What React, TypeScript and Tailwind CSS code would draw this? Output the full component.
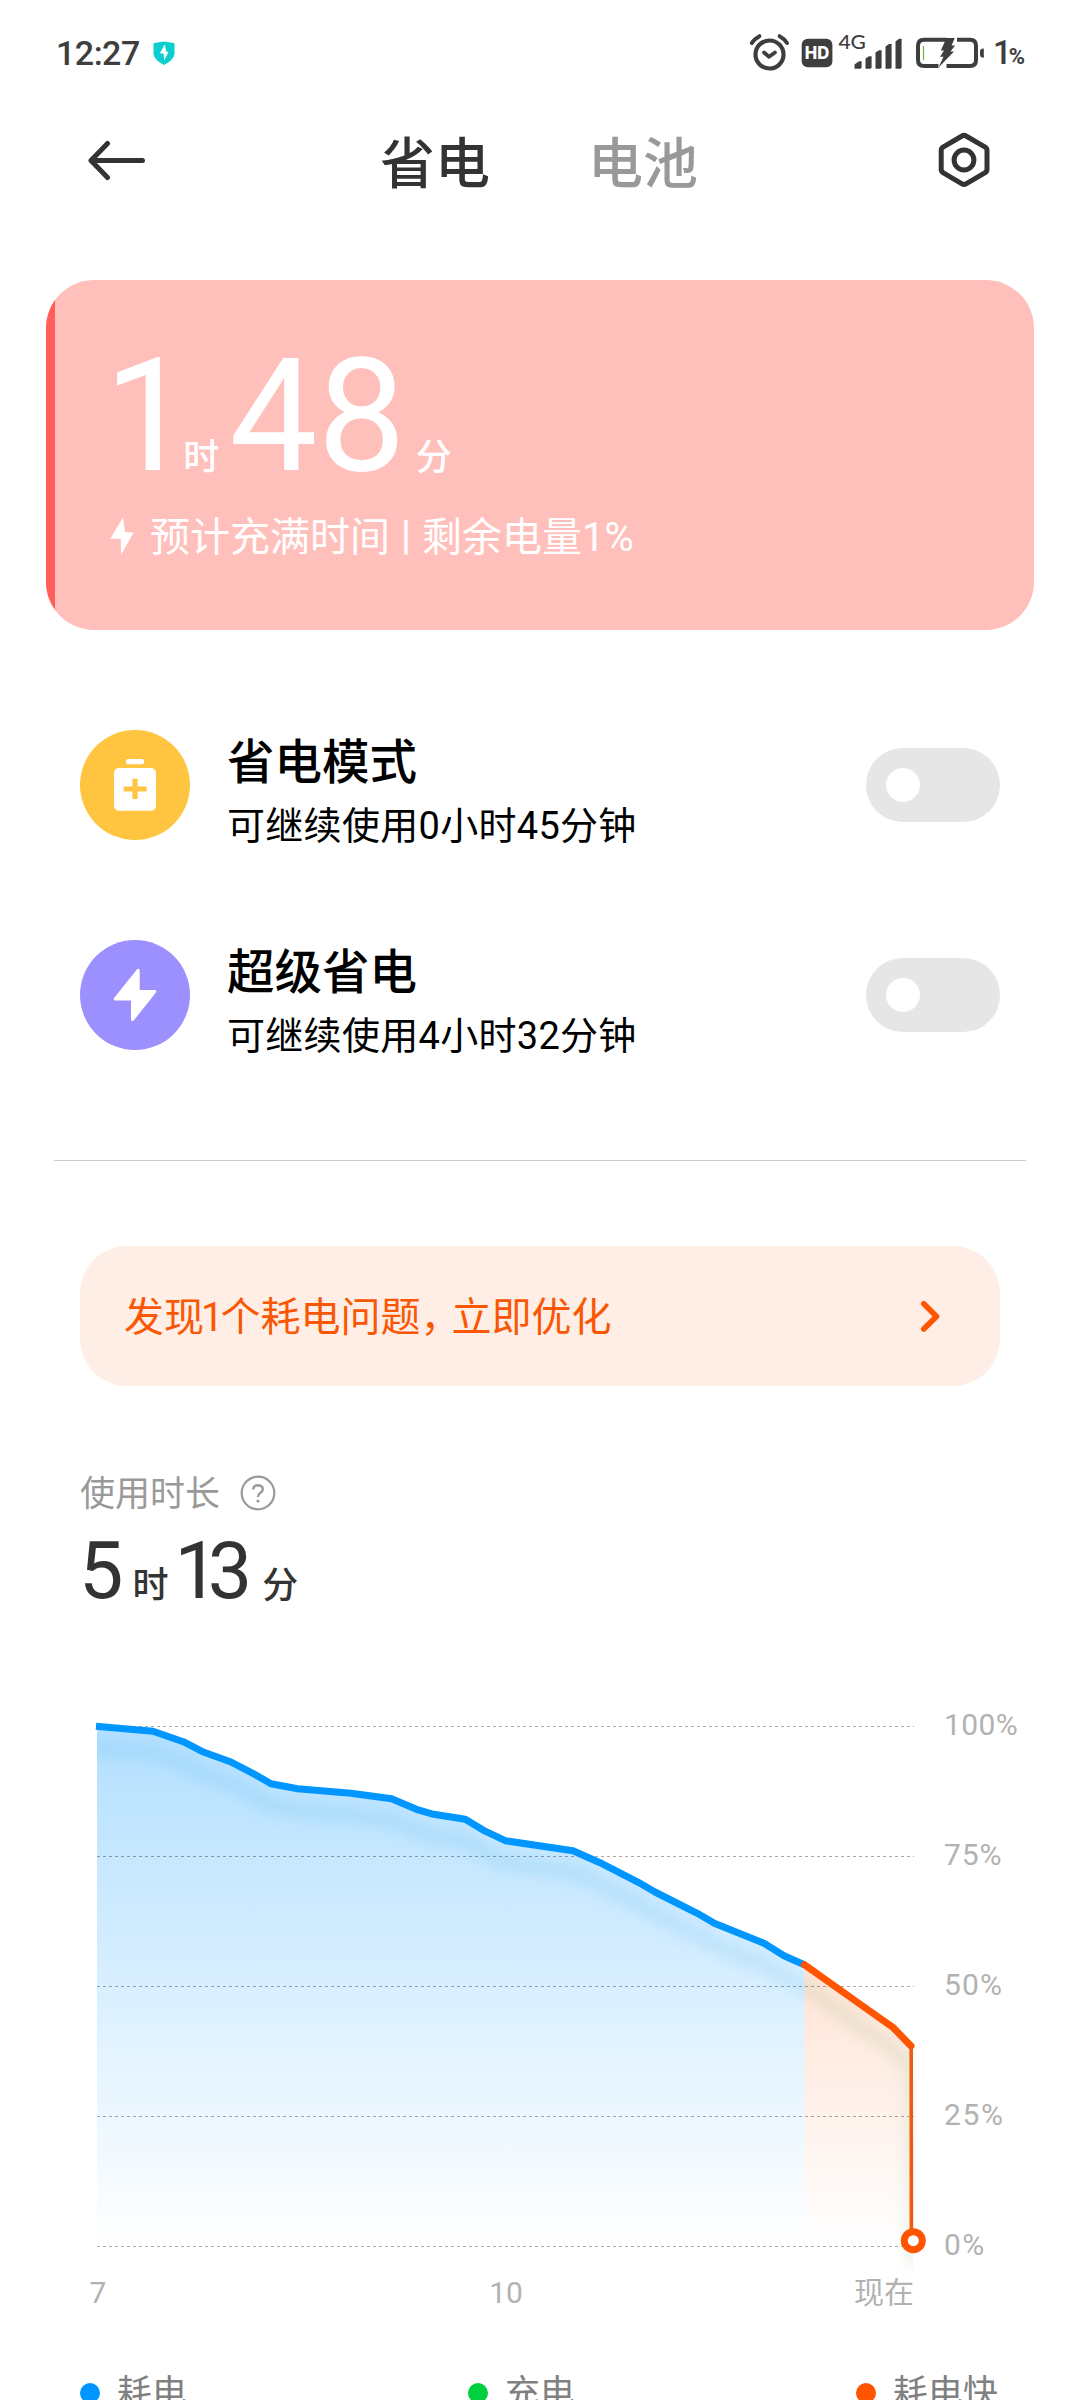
import React from "react";

const points: [number, number][] = [
  [96, 1726.3], [153, 1731.3], [183.3, 1741.7], [204, 1752.3], [231, 1762], [252.8, 1773.3],
  [271, 1783.7], [297.6, 1788.7], [351, 1793.3], [391.6, 1798.7], [416.4, 1809.3], [433.6, 1814.3],
  [465.3, 1819.3], [483.5, 1830.3], [505.3, 1840.7], [573, 1850.7], [600, 1862.7], [638.3, 1882.3],
  [655, 1892], [697.3, 1913.3], [714.3, 1923.3], [764, 1943.3], [784, 1955.7], [804.3, 1964.7],
];
const fastPoints: [number, number][] = [
  [804.3, 1964.7], [868.3, 2010], [893.3, 2027.7], [911, 2046],
];
const toStr = (p: [number, number][]) => p.map((q) => q.join(",")).join(" ");

function Shield() {
  return (
    <svg className="ml-[13px] h-[24px] w-[22px]" viewBox="0 0 22 24">
      <path d="M0.5 2.2 Q6 1 11 0.5 Q16 1 21.5 2.2 V12.5 Q21 19 11 24 Q1 19 0.5 12.5Z" fill="#0bcfcf" />
      <path d="M11.8 3.5 L13.2 10.5 L15.5 10.8 L11.2 19.5 L10.6 12.8 L6.8 12.3Z" fill="#fff" />
    </svg>
  );
}

function StatusIcons() {
  return (
    <svg className="h-[44px] w-[240px]" viewBox="746 30 240 44">
      <g fill="none" stroke="#3e3e3e">
        <circle cx="769.5" cy="53.5" r="14" strokeWidth="4.2" />
        <path d="M764 51.5 L769 55.8 L775 51.5" strokeWidth="3.8" strokeLinecap="round" strokeLinejoin="round" />
        <path d="M751.8 42 Q755 37.5 759.4 35.2" strokeWidth="4" strokeLinecap="round" />
        <path d="M787 42 Q784 37.5 779.6 35.2" strokeWidth="4" strokeLinecap="round" />
      </g>
      <rect x="801.7" y="37.7" width="30.7" height="28.6" rx="6" fill="#3e3e3e" />
      <text x="817" y="58" textAnchor="middle" fontSize="17" fontWeight="800" fill="#fff" fontFamily="Inter, sans-serif" textLength="24.5" lengthAdjust="spacingAndGlyphs">HD</text>
      <text x="838.4" y="48.3" fontSize="19.5" fill="#3e3e3e" fontFamily="Lato, sans-serif" fontWeight="500" textLength="27.5" lengthAdjust="spacingAndGlyphs">4G</text>
      <g fill="#3e3e3e">
        <path d="M854.5 67.7 V63.5 L859 60.3 H861.6 V66.5 L860.5 67.7Z" />
        <path d="M865.5 67.7 V57.5 L869 55.2 H871.6 V66.5 L870.5 67.7Z" />
        <path d="M875.5 67.7 V51.5 L879 49.2 H881.6 V66.5 L880.5 67.7Z" />
        <path d="M885.5 67.7 V45.5 L889 43 H891.6 V66.5 L890.5 67.7Z" />
        <path d="M895.5 67.7 V40.5 L899 37.7 H901.6 V66.5 L900.5 67.7Z" />
      </g>
      <path d="M947 38.7 H924 Q918 38.7 918 44.7 V59 Q918 65 924 65 H938.5" fill="none" stroke="#3e3e3e" strokeWidth="4" />
      <path d="M957 38.7 H970 Q976 38.7 976 44.7 V59 Q976 65 970 65 H946.5" fill="none" stroke="#3e3e3e" strokeWidth="4" />
      <path d="M980 50.5 Q980 47.5 983.8 47.5 V56.7 Q980 56.7 980 53.7Z" fill="#3e3e3e" />
      <path d="M923.5 45 V59" stroke="#6cb53c" strokeWidth="1.2" />
      <path d="M946.5 37 H954.8 L951.5 44.5 H955 L950.5 50.5 H954 L938.5 66.5 L943.5 55.8 H940 L944 49.5 H940.8Z" fill="#3e3e3e" />
    </svg>
  );
}

function Toggle() {
  return (
    <div className="mt-[68px] flex h-[74px] w-[134px] shrink-0 items-center rounded-[37px] bg-[#e6e6e6] pl-[20px]">
      <div className="size-[34px] rounded-full bg-white" />
    </div>
  );
}

function ModeRow({ icon, title, children }: { icon: React.ReactNode; title: string; children: React.ReactNode }) {
  return (
    <div className="flex h-[210px] items-start px-[80px]">
      <div className="mt-[50px] shrink-0">{icon}</div>
      <div className="mt-[55px] ml-[37px] flex-1 whitespace-nowrap text-black">
        <div className="text-[47.5px] leading-[56px] font-medium">{title}</div>
        <div className="mt-[11px] text-[38px] leading-[48px] tracking-[0.3px]">{children}</div>
      </div>
      <Toggle />
    </div>
  );
}

function Legend({ dot, label }: { dot: string; label: string }) {
  return (
    <div className="flex items-center">
      <span className={"size-[20px] rounded-full " + dot} />
      <span className="mt-[2px] ml-[17px] text-[35px] leading-[38px] text-[#808080]">{label}</span>
    </div>
  );
}

function BatteryChart() {
  const all = [...points, ...fastPoints.slice(1)];
  const shade = toStr([[60, 1724], ...all, [914, 2244]]);
  return (
    <svg className="block h-[620px] w-[1080px]" viewBox="0 1700 1080 620">
      <defs>
        <linearGradient id="blue" gradientUnits="userSpaceOnUse" x1="0" x2="0" y1="1726" y2="2246">
          <stop offset="0" stopColor="#0096ff" stopOpacity="0.3" />
          <stop offset="1" stopColor="#0096ff" stopOpacity="0" />
        </linearGradient>
        <linearGradient id="orange" gradientUnits="userSpaceOnUse" x1="0" x2="0" y1="1726" y2="2246">
          <stop offset="0" stopColor="#ff5500" stopOpacity="0.3" />
          <stop offset="1" stopColor="#ff5500" stopOpacity="0" />
        </linearGradient>
        <clipPath id="underBlue">
          <polygon points={`97,1726 ${toStr(points)} 804.5,2280 97,2280`} />
        </clipPath>
        <clipPath id="underOrange">
          <polygon points={`804.5,1964 ${toStr(fastPoints)} 913,2046 913,2280 804.5,2280`} />
        </clipPath>
        <filter id="soft" filterUnits="userSpaceOnUse" x="0" y="1700" width="1080" height="600">
          <feGaussianBlur stdDeviation="7" />
        </filter>
      </defs>
      <polygon points={`97,1726 ${toStr(points)} 804.5,2246 97,2246`} fill="url(#blue)" />
      <polygon points={`${toStr(fastPoints)} 911,2246 804.5,2246`} fill="url(#orange)" />
      <g clipPath="url(#underBlue)">
        <polyline points={shade} transform="translate(0 22)" fill="none" stroke="#0a8fd8" strokeOpacity="0.11" strokeWidth="15" filter="url(#soft)" />
      </g>
      <g clipPath="url(#underOrange)">
        <polyline points={shade} transform="translate(0 22)" fill="none" stroke="#6aa050" strokeOpacity="0.14" strokeWidth="13" filter="url(#soft)" />
      </g>
      {[1726.5, 1856.5, 1986.5, 2116.5, 2246.5].map((y) => (
        <line key={y} x1="97" x2="914" y1={y} y2={y} stroke="#000" strokeOpacity="0.33" strokeDasharray="3 3" />
      ))}
      <polyline points={toStr(points)} fill="none" stroke="#0096ff" strokeWidth="7" strokeLinejoin="round" />
      <polyline points={toStr(fastPoints)} fill="none" stroke="#ff5500" strokeWidth="7" strokeLinejoin="round" strokeLinecap="round" />
      <path d="M911.2 2046 L911.4 2230" stroke="#f05a10" strokeWidth="3.6" />
      <circle cx="913.3" cy="2240.7" r="9" fill="#fff" stroke="#ff5500" strokeWidth="7" />
      <g fontSize="30" fill="#b2b2b2">
        <text x="944" y="1735" letterSpacing="0.4">100%</text>
        <text x="944" y="1865" letterSpacing="0.9">75%</text>
        <text x="944" y="1995" letterSpacing="1.2">50%</text>
        <text x="944" y="2125" letterSpacing="1.6">25%</text>
        <text x="944" y="2255" letterSpacing="1.4">0%</text>
        <text x="98" y="2303" textAnchor="middle">7</text>
        <text x="506" y="2303" textAnchor="middle">10</text>
        <text x="914" y="2303" textAnchor="end">现在</text>
      </g>
    </svg>
  );
}

export default function App() {
  return (
    <div className="flex h-[2400px] w-[1080px] flex-col overflow-hidden bg-white font-['Roboto','Noto_Sans_CJK_SC',sans-serif]">
      <div className="flex h-[105px] shrink-0 items-center pl-[56px] pr-[55px] text-[#3e3e3e]">
        <span className="text-[34px] leading-[34px] font-medium tracking-[-0.5px]">12:27</span>
        <Shield />
        <span className="flex-1" />
        <StatusIcons />
        <span className="ml-[7px] text-[33px] leading-[34px] font-medium tracking-[-3px]">1</span>
        <span className="mt-[8px] text-[22px] leading-[24px] font-bold">%</span>
      </div>

      <div className="flex h-[110px] shrink-0 items-center pl-[88px] pr-[90px]">
        <svg className="h-[44px] w-[58px]" viewBox="88 138 58 44" fill="none" stroke="#333" strokeWidth="5" strokeLinecap="round" strokeLinejoin="round">
          <path d="M142.5 160.5 H91 M107.5 143.5 L91 160.5 L107.5 177.5" />
        </svg>
        <span className="mt-[7px] ml-[234px] text-[55px] leading-[60px] font-medium text-[#333]">省电</span>
        <span className="mt-[7px] ml-[98px] flex-1 text-[55px] leading-[60px] font-medium text-[#999]">电池</span>
        <svg className="h-[56px] w-[52px]" viewBox="938 132 52 56" fill="none" stroke="#333" strokeWidth="5" strokeLinejoin="round">
          <path d="M962 136 Q964 134.8 966 136 L985.2 147.2 Q987 148.3 987 150.3 V169.5 Q987 171.5 985.2 172.6 L966 183.8 Q964 185 962 183.8 L943 172.6 Q941.2 171.5 941.2 169.5 V150.3 Q941.2 148.3 943 147.2Z" />
          <circle cx="964" cy="160" r="9.9" />
        </svg>
      </div>

      <div className="mx-[46px] mt-[65px] flex h-[350px] shrink-0 overflow-hidden rounded-[48px] bg-[#ffc0bc] text-white">
        <div className="w-[9px] shrink-0 bg-[#ff5f58]" />
        <div className="pl-[55px] pt-[58px] whitespace-nowrap">
          <div className="flex h-[156px] items-baseline">
            <span className="-ml-[6px] text-[157px] leading-[156px] tracking-[-9px]">1</span>
            <span className="text-[36px] font-medium">时</span>
            <span className="ml-[10px] text-[157px] leading-[156px]">48</span>
            <span className="ml-[10px] text-[36px] font-medium">分</span>
          </div>
          <div className="mt-[18px] flex h-[48px] items-center">
            <svg className="h-[38px] w-[24px]" viewBox="110 515.5 24 38" fill="#fff">
              <path d="M123 515.7 L110.4 537.3 H120.8 L121 553.3 L133.7 531.1 L125 530.6Z" />
            </svg>
            <span className="mt-[3px] ml-[16px] text-[40px] leading-[48px]">预计充满时间</span>
            <span className="ml-[11px] text-[40px] leading-[48px] font-medium">|</span>
            <span className="mt-[3px] ml-[11px] text-[40px] leading-[48px]">剩余电量1%</span>
          </div>
        </div>
      </div>

      <div className="mt-[50px] shrink-0">
        <ModeRow
          title="省电模式"
          icon={
            <svg className="size-[110px]" viewBox="80 730 110 110">
              <circle cx="135" cy="785" r="55" fill="#ffc541" />
              <rect x="126" y="759" width="18" height="5.3" rx="2" fill="#fff" />
              <rect x="114" y="768" width="42" height="42.7" rx="5" fill="#fff" />
              <path d="M135 778.7 V799 M123.7 789 H146.6" stroke="#ffc541" strokeWidth="5.2" />
            </svg>
          }
        >
          可继续使用0小时45分钟
        </ModeRow>
        <ModeRow
          title="超级省电"
          icon={
            <svg className="size-[110px]" viewBox="80 940 110 110">
              <circle cx="135" cy="995" r="55" fill="#9c90ff" />
              <path d="M138.2 970.2 L115.3 999 H132.5 V1019.6 L154.8 991.5 H138.2Z" fill="#fff" stroke="#fff" strokeWidth="3" strokeLinejoin="round" />
            </svg>
          }
        >
          可继续使用4小时32分钟
        </ModeRow>
      </div>

      <div className="mx-[54px] mt-[60px] h-px shrink-0 bg-[#ccc]" />

      <div className="mx-[80px] mt-[85px] flex h-[140px] shrink-0 items-center rounded-[47px] bg-[#ffeee5] pl-[44px] pr-[59px] text-[#fa5705]">
        <span className="mt-[4px] flex-1 text-[40px] leading-[48px] whitespace-nowrap">
          发现<span className="-mx-[3px]">1</span>个耗电问题<span className="mr-[11px] [font-feature-settings:'halt']">，</span>立即优化
        </span>
        <svg className="h-[34px] w-[22px]" viewBox="919 1298.5 22 34" fill="none" stroke="#ff5500" strokeWidth="5.6" strokeLinecap="round" strokeLinejoin="round">
          <path d="M923.8 1303.2 L936.5 1316 L923.8 1328.6" />
        </svg>
      </div>

      <div className="mt-[88px] flex h-[38px] shrink-0 items-center px-[80px] text-[#999]">
        <span className="mt-[4px] text-[35px] leading-[38px]">使用时长</span>
        <svg className="ml-[20px] h-[36px] w-[36px]" viewBox="0 0 36 36" fill="none" stroke="#999" strokeWidth="2.2">
          <circle cx="18" cy="18" r="16.3" />
          <path d="M13.2 14.5 Q13.4 10.3 18 10.3 Q22.8 10.6 22.8 14.3 Q22.8 16.4 20.2 18 Q18 19.4 18 22" strokeWidth="2.4" />
          <circle cx="18" cy="26" r="1.6" fill="#999" stroke="none" />
        </svg>
      </div>
      <div className="mt-[19px] flex h-[80px] shrink-0 items-baseline pl-[79px] text-[#333]">
        <span className="text-[79px] leading-[80px]">5</span>
        <span className="ml-[9px] text-[36px] font-medium">时</span>
        <span className="ml-[6px] text-[79px] leading-[80px] tracking-[-11px]">1</span>
        <span className="text-[79px] leading-[80px]">3</span>
        <span className="ml-[10px] text-[36px] font-medium">分</span>
      </div>

      <div className="mt-[89px] shrink-0">
        <BatteryChart />
      </div>

      <div className="mt-[53px] flex shrink-0 justify-between pl-[80px] pr-[82px]">
        <Legend dot="bg-[#0096ff]" label="耗电" />
        <Legend dot="bg-[#00d040]" label="充电" />
        <Legend dot="bg-[#ff5500]" label="耗电快" />
      </div>
    </div>
  );
}
